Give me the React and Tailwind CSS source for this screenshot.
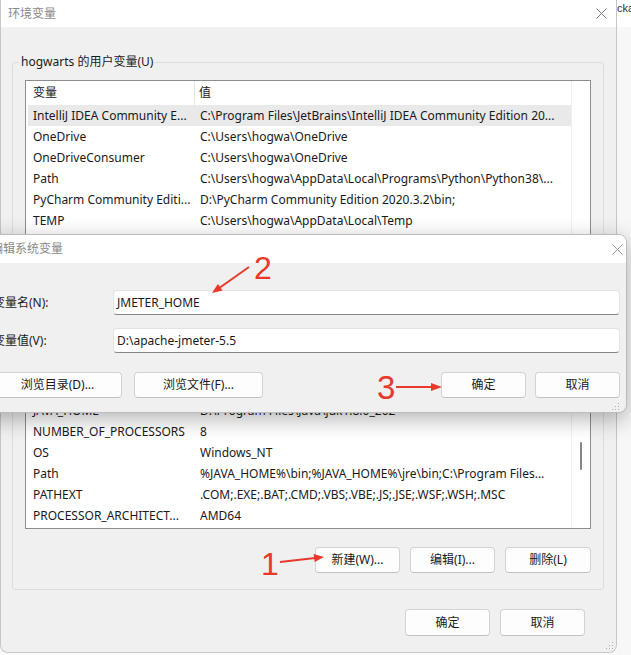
import React from 'react';

const userVars = [
  ['IntelliJ IDEA Community E...', 'C:\\Program Files\\JetBrains\\IntelliJ IDEA Community Edition 20...', true],
  ['OneDrive', 'C:\\Users\\hogwa\\OneDrive'],
  ['OneDriveConsumer', 'C:\\Users\\hogwa\\OneDrive'],
  ['Path', 'C:\\Users\\hogwa\\AppData\\Local\\Programs\\Python\\Python38\\...'],
  ['PyCharm Community Editi...', 'D:\\PyCharm Community Edition 2020.3.2\\bin;'],
  ['TEMP', 'C:\\Users\\hogwa\\AppData\\Local\\Temp'],
  ['TMP', 'C:\\Users\\hogwa\\AppData\\Local\\Temp'],
];

const systemVars = [
  ['ComSpec', 'C:\\WINDOWS\\system32\\cmd.exe'],
  ['DriverData', 'C:\\Windows\\System32\\Drivers\\DriverData'],
  ['JAVA_HOME', 'D:\\Program Files\\Java\\jdk1.8.0_202'],
  ['NUMBER_OF_PROCESSORS', '8'],
  ['OS', 'Windows_NT'],
  ['Path', '%JAVA_HOME%\\bin;%JAVA_HOME%\\jre\\bin;C:\\Program Files...'],
  ['PATHEXT', '.COM;.EXE;.BAT;.CMD;.VBS;.VBE;.JS;.JSE;.WSF;.WSH;.MSC'],
  ['PROCESSOR_ARCHITECT...', 'AMD64'],
  ['PROCESSOR_IDENTIFIER', 'Intel64 Family 6 Model 140 Stepping 1, GenuineIntel'],
];

const CloseIcon = ({ color }) => (
  <svg width="11" height="11" viewBox="0 0 11 11">
    <path d="M0.5 0.5 L10.5 10.5 M10.5 0.5 L0.5 10.5" stroke={color} strokeWidth="1" />
  </svg>
);

const Grip = () => (
  <svg width="8" height="8" viewBox="0 0 8 8" fill="#b0b0b0">
    <rect x="6" y="0" width="1" height="1" />
    <rect x="3" y="3" width="1" height="1" />
    <rect x="6" y="3" width="1" height="1" />
    <rect x="0" y="6" width="1" height="1" />
    <rect x="3" y="6" width="1" height="1" />
    <rect x="6" y="6" width="1" height="1" />
  </svg>
);

const Btn = ({ children, w = 'w-[85px]', h = 'h-[26px]' }) => (
  <div className={`${w} ${h} flex items-center justify-center rounded-[4px] border border-[#d3d3d3] border-b-[#c2c2c2] bg-[#fdfdfd] text-[#1a1a1a]`}>
    {children}
  </div>
);

const Row = ({ name, value, selected }) => (
  <div className={`flex h-[21px] shrink-0 items-center whitespace-nowrap ${selected ? 'bg-[#e9e9e9]' : ''}`}>
    <div className="w-[167px] overflow-hidden pl-[5px]">{name}</div>
    <div className="flex-1 overflow-hidden pl-[5px]">{value}</div>
  </div>
);

const VarList = ({ rows, height, thumb }) => (
  <div className={`mt-[10px] flex ${height} overflow-hidden border border-[#8d8d8d] bg-white`}>
    <div className="flex flex-1 flex-col overflow-hidden pl-[2px]">
      <div className="flex h-[24px] shrink-0 items-center">
        <div className="flex h-full w-[167px] items-center border-r border-[#e5e5e5] pl-[5px]">变量</div>
        <div className="flex h-full flex-1 items-center pl-[4px]">值</div>
      </div>
      {rows.map(([n, v, s], i) => (
        <Row key={i} name={n} value={v} selected={s} />
      ))}
    </div>
    <div className="flex w-[19px] shrink-0 justify-center border-l border-[#f0f0f0]">
      {thumb && <div className="mt-[108px] h-[28px] w-[2px] rounded-full bg-[#858585]" />}
    </div>
  </div>
);

const Group = ({ label, children, className }) => (
  <fieldset className={`w-[592px] rounded-[3px] border border-[#dcdcdc] ${className}`}>
    <legend className="ml-[6px] px-[2px] leading-[16px] text-[#1a1a1a]">{label}</legend>
    <div className="px-[12px]">{children}</div>
  </fieldset>
);

export default function App() {
  return (
    <div className="relative flex h-[655px] w-[631px] overflow-hidden bg-[#fafafa] font-['Noto_Sans','Noto_Sans_CJK_SC',sans-serif] text-[12px] text-[#1a1a1a]">
      {/* environment variables window */}
      <div className="flex h-[653px] w-[617px] shrink-0 flex-col overflow-hidden rounded-b-[8px] border border-t-0 border-[#c6c6c6] bg-[#f0f0f0]">
        <div className="flex h-[27px] shrink-0 items-center justify-between bg-white pl-[7px] pr-[9px]">
          <span className="text-[#8a8a8a]">环境变量</span>
          <CloseIcon color="#7a7a7a" />
        </div>
        <div className="flex flex-1 flex-col pl-[11px] pt-[27px]">
          <Group label="hogwarts 的用户变量(U)" className="pb-[12px]">
            <VarList rows={userVars} height="h-[170px]" />
            <div className="mt-[10px] flex justify-end gap-[10px]">
              <Btn>新建(N)...</Btn>
              <Btn>编辑(E)...</Btn>
              <Btn>删除(D)</Btn>
            </div>
          </Group>
          <Group label="系统变量(S)" className="mt-[8px] pb-[16px]">
            <VarList rows={systemVars} height="h-[196px]" thumb />
            <div className="mt-[18px] flex justify-end gap-[10px]">
              <Btn>新建(W)...</Btn>
              <Btn>编辑(I)...</Btn>
              <Btn w="w-[86px]">删除(L)</Btn>
            </div>
          </Group>
          <div className="mt-[19px] flex justify-end gap-[10px] pr-[31px]">
            <Btn h="h-[27px]">确定</Btn>
            <Btn h="h-[27px]">取消</Btn>
          </div>
          <div className="mt-auto flex justify-end pb-[2px] pr-[2px]">
            <Grip />
          </div>
        </div>
      </div>

      {/* window behind */}
      <div className="flex-1 overflow-hidden bg-[#f7f7f7]">
        <div className="h-[27px] whitespace-nowrap bg-white pt-[2px] font-['Liberation_Sans',sans-serif] text-[11px] leading-[12px] text-[#333]">cka</div>
      </div>

      {/* edit system variable dialog */}
      <div className="absolute left-[-21px] top-[234px] flex h-[179px] w-[648px] flex-col overflow-hidden rounded-[8px] border border-[#bdbdbd] bg-[#f0f0f0] shadow-[0_6px_22px_rgba(0,0,0,0.3)]">
        <div className="flex h-[28px] shrink-0 items-center justify-between bg-white pl-[11px] pr-[3px]">
          <span className="text-[#8a8a8a]">编辑系统变量</span>
          <CloseIcon color="#9a9a9a" />
        </div>
        <div className="flex flex-1 flex-col pl-[13px] pr-[6px] pt-[27px]">
          <div className="flex h-[25px] items-center">
            <div className="w-[120px] shrink-0">变量名(N):</div>
            <div className="flex h-full flex-1 items-center rounded-[4px] border border-[#e3e3e3] border-b-[#868686] bg-white pl-[3px]">JMETER_HOME</div>
          </div>
          <div className="mt-[13px] flex h-[25px] items-center">
            <div className="w-[120px] shrink-0">变量值(V):</div>
            <div className="flex h-full flex-1 items-center rounded-[4px] border border-[#e3e3e3] border-b-[#868686] bg-white pl-[3px]">D:\apache-jmeter-5.5</div>
          </div>
          <div className="mt-[19px] flex items-center">
            <Btn w="w-[129px]">浏览目录(D)...</Btn>
            <div className="ml-[12px]">
              <Btn w="w-[129px]">浏览文件(F)...</Btn>
            </div>
            <div className="ml-auto flex gap-[9px]">
              <Btn w="w-[85px]">确定</Btn>
              <Btn w="w-[85px]">取消</Btn>
            </div>
          </div>
          <div className="mt-auto flex justify-end pb-[1px]">
            <Grip />
          </div>
        </div>
      </div>

      {/* red annotations */}
      <svg className="pointer-events-none absolute left-0 top-0" width="631" height="655" viewBox="0 0 631 655">
        <g stroke="#e8392b" strokeWidth="2" fill="#e8392b">
          <line x1="249" y1="267" x2="220" y2="287.5" />
          <polygon points="212,293 222.5,290.5 217.9,283.9" stroke="none" />
          <line x1="396" y1="387" x2="432" y2="387" />
          <polygon points="442,387 431,383 431,391" stroke="none" />
          <line x1="280" y1="562" x2="315" y2="558" />
          <polygon points="324,557 314.6,562.1 313.6,554.1" stroke="none" />
        </g>
      </svg>
      <span className="pointer-events-none absolute left-[254px] top-[252px] font-['Liberation_Sans',sans-serif] text-[32px] leading-none text-[#e8392b]">2</span>
      <span className="pointer-events-none absolute left-[377px] top-[371px] font-['Liberation_Sans',sans-serif] text-[33px] leading-none text-[#e8392b]">3</span>
      <span className="pointer-events-none absolute left-[261px] top-[548px] font-['Liberation_Sans',sans-serif] text-[32px] leading-none text-[#e8392b]">1</span>
    </div>
  );
}
